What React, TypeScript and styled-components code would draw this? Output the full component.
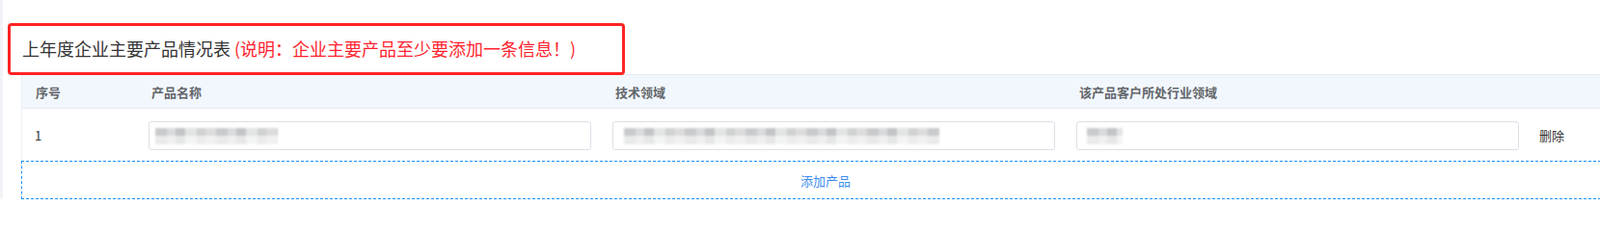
import React from "react";
import styled, { createGlobalStyle } from "styled-components";

const GlobalStyle = createGlobalStyle`
  html, body {
    margin: 0;
    padding: 0;
    background: #ffffff;
    overflow: hidden;
  }
  body {
    font-family: "Noto Sans CJK SC", "Noto Sans", "Liberation Sans", sans-serif;
  }
`;

const Page = styled.div`
  display: flex;
  align-items: stretch;
  width: 1659px;
  height: 207px;
  overflow: hidden;
`;

const SideEdge = styled.div`
  flex: 0 0 3px;
  height: 207px;
  background: #f1f3f6;
`;

const Main = styled.div`
  flex: 1;
  display: flex;
  flex-direction: column;
  padding-top: 24px;
  min-width: 0;
`;

const TitleBox = styled.div`
  margin-left: 5px;
  width: 640px;
  height: 54px;
  flex: 0 0 54px;
  box-sizing: border-box;
  border: 3px solid #ff2323;
  border-radius: 4px;
  display: flex;
  align-items: center;
  padding-left: 12px;
  padding-bottom: 3px;
  font-size: 18px;
  color: #333333;
  white-space: nowrap;
  position: relative;
  z-index: 1;
`;

const Note = styled.span`
  color: #ff1f2e;
`;

const Table = styled.div`
  margin-left: 19px;
  margin-top: -1px;
  width: 1668px;
  flex: 0 0 auto;
`;

const columns = "120px 481px 481px 481px 1fr";

const HeaderRow = styled.div`
  display: grid;
  grid-template-columns: ${columns};
  height: 36px;
  box-sizing: border-box;
  background: #f2f7fd;
  border-top: 1px solid #e8ecf2;
  border-bottom: 1px solid #e8ecf2;
  border-left: 1px solid #ebeef5;
`;

const HeadCell = styled.div`
  display: flex;
  align-items: center;
  padding-left: 14px;
  font-size: 13px;
  font-weight: 700;
  color: #63666b;
  white-space: nowrap;
`;

const BodyRow = styled.div`
  display: grid;
  grid-template-columns: ${columns};
  height: 54px;
  box-sizing: border-box;
  border-left: 1px solid #ebeef5;
  padding-top: 1px;
`;

const Cell = styled.div<{ $pad?: number }>`
  display: flex;
  align-items: center;
  padding-left: ${(p) => p.$pad ?? 11}px;
  font-size: 13px;
  color: #333333;
  white-space: nowrap;
`;

const InputBox = styled.div`
  position: relative;
  width: 459px;
  height: 30px;
  box-sizing: border-box;
  border: 1px solid #dcdfe6;
  border-radius: 3px;
  background: #ffffff;
  overflow: hidden;
`;

const Redaction = styled.div<{ $left: number; $width: number }>`
  position: absolute;
  left: ${(p) => p.$left}px;
  top: 6px;
  width: ${(p) => p.$width}px;
  height: 17px;
  filter: blur(1.2px);
  opacity: 0.9;
  background:
    linear-gradient(
      to bottom,
      rgba(255, 255, 255, 0) 0 50%,
      rgba(255, 255, 255, 0.6) 50% 100%
    ),
    repeating-linear-gradient(
      to right,
      #c4c5c7 0 12px,
      #d6d7d9 12px 21px,
      #bdbec0 21px 31px,
      #e0e1e2 31px 43px,
      #cbcccd 43px 52px,
      #d9d9da 52px 63px
    );
`;

const DeleteLink = styled.span`
  font-size: 13px;
  color: #333333;
  cursor: pointer;
`;

const AddButton = styled.div`
  height: 40px;
  box-sizing: border-box;
  border: 1px dashed #1890ff;
  display: flex;
  align-items: center;
  justify-content: center;
  font-size: 13px;
  color: #3d8cf2;
  cursor: pointer;
`;

export default function App() {
  return (
    <>
      <GlobalStyle />
      <Page>
        <SideEdge />
        <Main>
          <TitleBox>
            上年度企业主要产品情况表&nbsp;<Note>(说明：企业主要产品至少要添加一条信息！)</Note>
          </TitleBox>
          <Table>
            <HeaderRow>
              <HeadCell>序号</HeadCell>
              <HeadCell>产品名称</HeadCell>
              <HeadCell>技术领域</HeadCell>
              <HeadCell>该产品客户所处行业领域</HeadCell>
              <HeadCell />
            </HeaderRow>
            <BodyRow>
              <Cell $pad={13}>1</Cell>
              <Cell>
                <InputBox>
                  <Redaction $left={6} $width={127} />
                </InputBox>
              </Cell>
              <Cell>
                <InputBox>
                  <Redaction $left={11} $width={327} />
                </InputBox>
              </Cell>
              <Cell>
                <InputBox>
                  <Redaction $left={10} $width={37} />
                </InputBox>
              </Cell>
              <Cell $pad={10}>
                <DeleteLink>删除</DeleteLink>
              </Cell>
            </BodyRow>
            <AddButton>添加产品</AddButton>
          </Table>
        </Main>
      </Page>
    </>
  );
}
